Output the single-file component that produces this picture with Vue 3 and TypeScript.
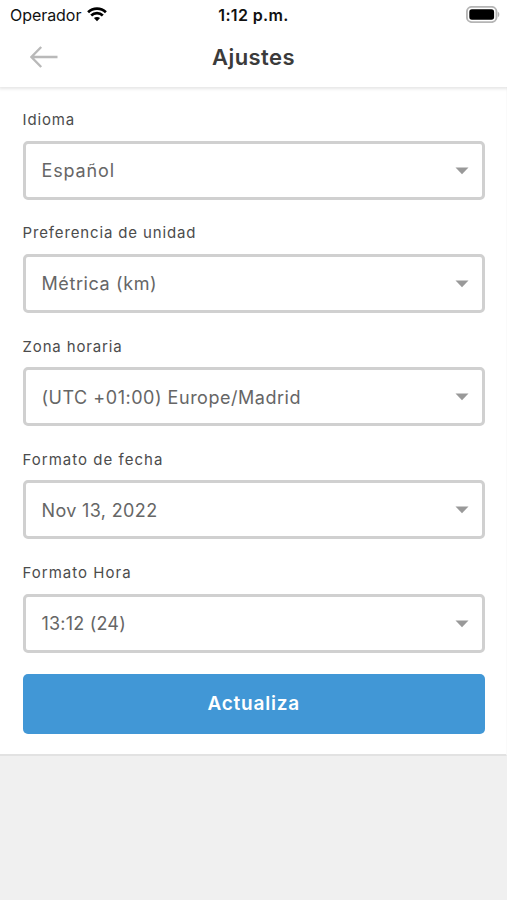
<script setup lang="ts">
import { ref } from 'vue'

interface Field {
  id: string
  label: string
  value: string
}

const fields = ref<Field[]>([
  { id: 'language', label: 'Idioma', value: 'Español' },
  { id: 'units', label: 'Preferencia de unidad', value: 'Métrica (km)' },
  { id: 'timezone', label: 'Zona horaria', value: '(UTC +01:00) Europe/Madrid' },
  { id: 'date', label: 'Formato de fecha', value: 'Nov 13, 2022' },
  { id: 'time', label: 'Formato Hora', value: '13:12 (24)' },
])
</script>

<template>
  <div class="screen">
    <header class="header">
      <div class="status">
        <div class="carrier">
          <span class="carrier-name">Operador</span>
          <svg class="wifi" viewBox="0 0 20 15" width="20" height="15">
            <path d="M1.1 5.3C6.1 .5 13.9 .5 18.9 5.3" />
            <path d="M4.2 8.5C7.4 5.4 12.6 5.4 15.8 8.5" />
            <path class="solid" d="M6.9 11.1C8.6 9.5 11.4 9.5 13.1 11.1L10 14.3Z" />
          </svg>
        </div>
        <span class="clock">1:12 p.m.</span>
        <svg class="battery" viewBox="0 0 34 17" width="34" height="17">
          <rect class="shell" x=".9" y=".9" width="29.6" height="15.2" rx="4.8" />
          <rect x="3.3" y="3.3" width="24.8" height="10.4" rx="2.6" />
          <path class="cap" d="M31.9 5.8C33.8 6.5 33.8 10.5 31.9 11.2Z" />
        </svg>
      </div>
      <div class="nav">
        <button class="back" aria-label="Atrás">
          <svg viewBox="0 0 28 22" width="28" height="22">
            <path d="M11.2 1L1.4 11L11.2 21M1.4 11H27.5" />
          </svg>
        </button>
        <h1 class="title">Ajustes</h1>
      </div>
    </header>

    <main class="form">
      <div v-for="field in fields" :key="field.id" class="field" :class="field.id">
        <span class="label">{{ field.label }}</span>
        <button class="select">
          <span class="value">{{ field.value }}</span>
          <svg class="caret" viewBox="0 0 14 8" width="14" height="8">
            <path d="M.5 .5H13.5L7 7.2Z" />
          </svg>
        </button>
      </div>
      <button class="submit">Actualiza</button>
    </main>
  </div>
</template>

<style>
body {
  background: #f0f0f0;
}
</style>

<style scoped>
.screen {
  box-sizing: border-box;
  height: 900px;
  overflow: hidden;
  background: #f0f0f0;
  font-family: Inter, "Liberation Sans", sans-serif;
}

button {
  border: 0;
  padding: 0;
  background: none;
  font: inherit;
}

svg {
  display: block;
}

.header {
  box-sizing: border-box;
  height: 87px;
  position: relative;
  background: #fff;
  box-shadow: 0 1px 3px 1px rgba(0, 0, 0, 0.1);
}

.status {
  display: grid;
  grid-template-columns: 1fr auto 1fr;
  align-items: center;
  height: 30px;
  padding: 0 7px 0 10px;
  color: #111;
}

.carrier {
  display: flex;
  align-items: center;
  gap: 6px;
}

.carrier-name {
  font-size: 16px;
  letter-spacing: -0.05px;
}

.wifi {
  margin-top: -2px;
  fill: none;
  stroke: #000;
  stroke-width: 2.7;
}

.wifi .solid {
  fill: #000;
  stroke: none;
}

.clock {
  margin-right: 3px;
  font-size: 16px;
  font-weight: 600;
  letter-spacing: 0.35px;
}

.battery {
  justify-self: end;
  margin-top: -2px;
}

.shell {
  fill: none;
  stroke: #b5b5b5;
  stroke-width: 1.9;
}

.cap {
  fill: #b5b5b5;
}

.nav {
  display: grid;
  grid-template-columns: 1fr auto 1fr;
  align-items: center;
  height: 54px;
  padding: 0 30px;
}

.back {
  justify-self: start;
}

.back path {
  fill: none;
  stroke: #b9b9b9;
  stroke-width: 2.4;
}

.title {
  margin: 0 0 1px;
  color: #3b3b3b;
  font-size: 22px;
  font-weight: 600;
  line-height: 26px;
  letter-spacing: 0.4px;
}

.form {
  box-sizing: border-box;
  height: 669px;
  padding: 22px 21px 0 22.5px;
  border-right: 1px solid #fafafa;
  border-bottom: 2px solid #e2e2e2;
  background: #fff;
}

.field {
  display: flex;
  flex-direction: column;
  height: 113.25px;
}

.label {
  height: 31.5px;
  color: #4c4c4c;
  font-size: 15px;
  line-height: 21px;
  letter-spacing: 0.86px;
}

.select {
  box-sizing: border-box;
  display: flex;
  align-items: center;
  justify-content: space-between;
  height: 59px;
  padding: 1px 13px 0 16px;
  border: 3px solid #d0d0d0;
  border-radius: 5px;
  color: #666;
  text-align: left;
}

.value {
  font-size: 18px;
  letter-spacing: 0.6px;
}

.language .value {
  letter-spacing: 0.85px;
}

.timezone .value {
  letter-spacing: 0.52px;
}

.date .value {
  letter-spacing: 0.35px;
}

.time .value {
  letter-spacing: 0.2px;
}

.date .label,
.time .label {
  letter-spacing: 1.02px;
}

.caret path {
  fill: #999;
}

.submit {
  display: block;
  width: 100%;
  height: 60px;
  margin-top: -1px;
  padding-bottom: 1px;
  border-radius: 5px;
  background: #4197d6;
  color: #fff;
  font-size: 19px;
  font-weight: 600;
  letter-spacing: 0.8px;
}
</style>
